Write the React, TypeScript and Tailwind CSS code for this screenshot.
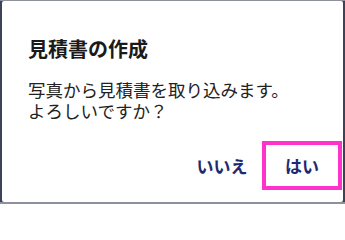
export default function App() {
  return (
    <div className="w-[345px] h-[204px] bg-[#3d4259] border-t border-b-2 border-[#8d919c] px-[2px] flex" style={{ fontFamily: '"Noto Sans CJK JP", "Noto Sans", sans-serif' }}>
      <div className="flex-1 bg-white rounded-[2px] flex flex-col pt-[36px] pb-[12px]">
        <div className="pl-[26px] text-[20px] leading-[24px] font-bold text-[#1a1a1a]">見積書の作成</div>
        <div className="pl-[26px] mt-[18px] text-[17.5px] leading-[21px] text-[#222222]">
          <div>写真から見積書を取り込みます。</div>
          <div>よろしいですか？</div>
        </div>
        <div className="mt-auto flex justify-end pr-[1px]">
          <div className="w-[80px] h-[49px] flex items-center justify-center text-[17px] font-bold text-[#1e2a6e]">いいえ</div>
          <div className="w-[80px] h-[49px] flex items-center justify-center text-[17px] font-bold text-[#1e2a6e] border-4 border-[#ff33cc]">はい</div>
        </div>
      </div>
    </div>
  );
}
